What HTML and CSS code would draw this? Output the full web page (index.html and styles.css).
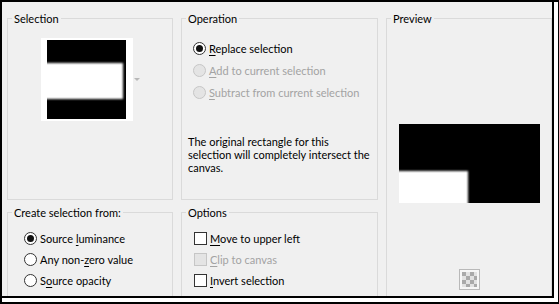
FILE: index.html
```html
<!DOCTYPE html>
<html lang="en">
<head>
    <meta charset="UTF-8">
    <title>Selection From Mask</title>
    <link rel="stylesheet" href="styles.css">
</head>
<body>
    <div class="frame">
        <div class="dialog">

            <fieldset class="group">
                <legend>Selection</legend>
                <div class="thumb-row">
                    <div class="thumb">
                        <svg width="79" height="79" viewBox="0 0 79 79">
                            <defs>
                                <filter id="soft" x="-20%" y="-20%" width="140%" height="140%">
                                    <feGaussianBlur stdDeviation="1.2"/>
                                </filter>
                            </defs>
                            <rect width="79" height="79" fill="#000"/>
                            <rect x="-4" y="23" width="80" height="36" fill="#fff" filter="url(#soft)"/>
                        </svg>
                    </div>
                    <span class="drop-arrow"></span>
                </div>
            </fieldset>

            <fieldset class="group">
                <legend>Operation</legend>
                <div class="choices op-choices">
                    <label class="choice"><span class="radio checked"></span><span><u>R</u>eplace selection</span></label>
                    <label class="choice disabled"><span class="radio"></span><span><u>A</u>dd to current selection</span></label>
                    <label class="choice disabled"><span class="radio"></span><span><u>S</u>ubtract from current selection</span></label>
                </div>
                <p class="note">The original rectangle for this selection will completely intersect the canvas.</p>
            </fieldset>

            <fieldset class="group preview">
                <legend>Preview</legend>
                <svg class="preview-image" width="141" height="79" viewBox="0 0 141 79">
                    <defs>
                        <filter id="soft2" x="-20%" y="-20%" width="140%" height="140%">
                            <feGaussianBlur stdDeviation="1.2"/>
                        </filter>
                    </defs>
                    <rect width="141" height="79" fill="#000"/>
                    <rect x="-4" y="47" width="73" height="40" fill="#fff" filter="url(#soft2)"/>
                </svg>
                <svg class="checker" width="21" height="21" viewBox="0 0 21 21">
                    <defs>
                        <pattern id="cells" x="3" y="3" width="8" height="8" patternUnits="userSpaceOnUse">
                            <rect width="8" height="8" fill="#e2e2e2"/>
                            <rect width="4" height="4" fill="#a9a9a9"/>
                            <rect x="4" y="4" width="4" height="4" fill="#a9a9a9"/>
                        </pattern>
                    </defs>
                    <rect x="0.5" y="0.5" width="20" height="20" fill="#f6f6f6" stroke="#b9b9b9"/>
                    <rect x="3" y="3" width="15" height="15" fill="url(#cells)"/>
                </svg>
            </fieldset>

            <fieldset class="group bottom">
                <legend>Create selection from:</legend>
                <div class="choices src-choices">
                    <label class="choice small"><span class="radio checked"></span><span>Source <u>l</u>uminance</span></label>
                    <label class="choice small"><span class="radio"></span><span>Any non-<u>z</u>ero value</span></label>
                    <label class="choice small"><span class="radio"></span><span>S<u>o</u>urce opacity</span></label>
                </div>
            </fieldset>

            <fieldset class="group bottom">
                <legend>Options</legend>
                <div class="choices opt-choices">
                    <label class="choice small"><span class="check"></span><span><u>M</u>ove to upper left</span></label>
                    <label class="choice small disabled"><span class="check"></span><span><u>C</u>lip to canvas</span></label>
                    <label class="choice small"><span class="check"></span><span><u>I</u>nvert selection</span></label>
                </div>
            </fieldset>

        </div>
    </div>
</body>
</html>
```

FILE: styles.css
```css
body {
    margin: 0;
    font-family: Lato, "Liberation Sans", sans-serif;
    font-size: 11px;
    color: #000;
}
.frame {
    width: 559px;
    height: 304px;
    box-sizing: border-box;
    border-style: solid;
    border-color: #000;
    border-width: 2px 1px 2px 2px;
    padding: 0 4px 4px 0;
    background-color: #fff;
}
.dialog {
    height: 100%;
    box-sizing: border-box;
    background-color: #f0f0f0;
    border-right: 2px solid #000;
    border-bottom: 2px solid #000;
    padding: 10px 0 0 5px;
    display: grid;
    grid-template-columns: 166px 197px 166px;
    grid-template-rows: 188px 90px;
    column-gap: 8px;
    row-gap: 6px;
}

.group {
    margin: 0;
    padding: 0;
    min-width: 0;
    border: 1px solid #dadada;
}
.group legend {
    margin-left: 4px;
    padding: 0 2px;
    line-height: 13px;
}
.group.bottom {
    border-bottom-width: 0;
}
.preview {
    grid-row: 1 / 3;
    grid-column: 3;
    border-bottom-width: 0;
    display: flex;
    flex-direction: column;
    align-items: center;
}

.thumb-row {
    margin-top: 13px;
    display: flex;
    justify-content: center;
    align-items: center;
    gap: 1px;
}
.thumb {
    background-color: #fff;
    padding: 2px 7px 2px 6px;
    line-height: 0;
}
.drop-arrow {
    width: 0;
    height: 0;
    border-left: 3px solid transparent;
    border-right: 3px solid transparent;
    border-top: 3px solid #b8b8b8;
}

.choices {
    display: flex;
    flex-direction: column;
}
.op-choices {
    margin-top: 12px;
    padding-left: 11px;
}
.src-choices {
    margin-top: 9px;
    padding-left: 16px;
}
.opt-choices {
    margin-top: 9px;
    padding-left: 12px;
}
.choice {
    display: flex;
    align-items: center;
    gap: 3px;
    height: 22px;
}
.choice.small {
    height: 21px;
}
.choice.disabled {
    color: #a3a3a3;
}
.choice u {
    text-underline-offset: 2px;
}

.radio {
    flex: none;
    width: 13px;
    height: 13px;
    box-sizing: border-box;
    border: 1px solid #333;
    border-radius: 50%;
    background-color: #fff;
    display: flex;
    align-items: center;
    justify-content: center;
}
.radio.checked::after {
    content: "";
    width: 7px;
    height: 7px;
    border-radius: 50%;
    background-color: #111;
}
.disabled .radio {
    border-color: #c6c6c6;
    background-color: #e4e4e4;
}
.check {
    flex: none;
    width: 13px;
    height: 13px;
    box-sizing: border-box;
    border: 1px solid #333;
    background-color: #fff;
}
.disabled .check {
    border-color: #c6c6c6;
    background-color: #e4e4e4;
}

.note {
    margin: 32px 0 0 6px;
    width: 185px;
    line-height: 13px;
}

.preview-image {
    margin-top: 99px;
    display: block;
}
.checker {
    margin-top: 66px;
    display: block;
}
```
